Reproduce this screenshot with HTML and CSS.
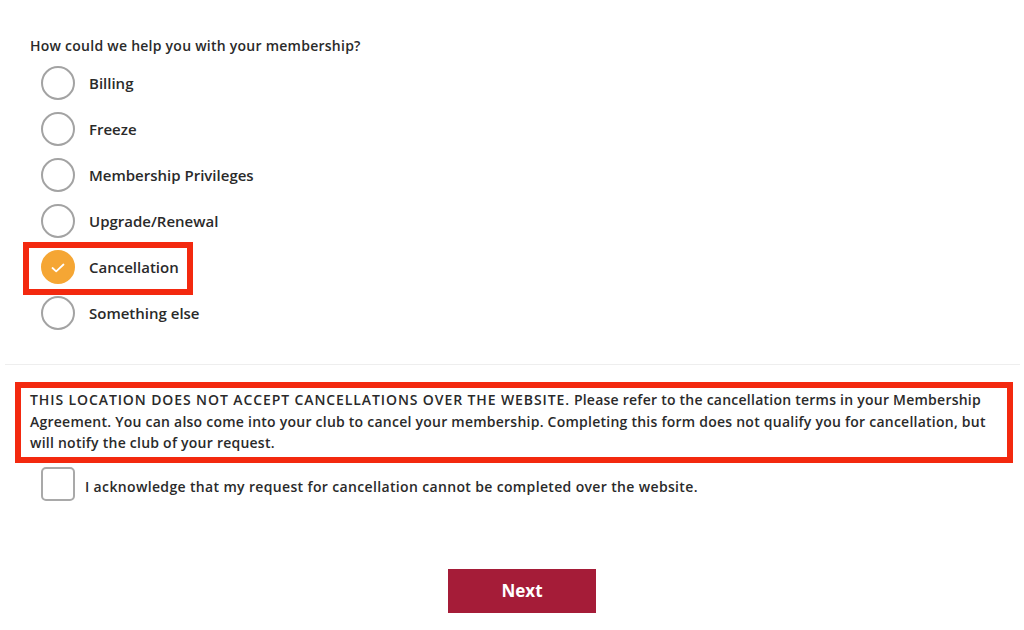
FILE: index.html
```html
<!DOCTYPE html>
<html lang="en">
<head>
    <meta charset="UTF-8">
    <meta name="viewport" content="width=device-width, initial-scale=1.0">
    <title>Membership Help</title>
    <link rel="stylesheet" href="styles.css">
</head>
<body>
    <div class="form">
        <p class="question">How could we help you with your membership?</p>
        <div class="options">
            <label class="option"><span class="radio"></span>Billing</label>
            <label class="option"><span class="radio"></span>Freeze</label>
            <label class="option"><span class="radio"></span>Membership Privileges</label>
            <label class="option"><span class="radio"></span>Upgrade/Renewal</label>
            <label class="option selected">
                <span class="radio checked">
                    <svg width="14" height="10" viewBox="0 0 14 10"><path d="M1.5 5 L5.2 8.3 L12.5 1.5" fill="none" stroke="#fff" stroke-width="1.8" stroke-linecap="round" stroke-linejoin="round"/></svg>
                </span>Cancellation
            </label>
            <label class="option"><span class="radio"></span>Something else</label>
        </div>
    </div>

    <hr class="divider">

    <div class="notice"><span class="caps">THIS LOCATION DOES NOT ACCEPT CANCELLATIONS OVER THE WEBSITE.</span> Please refer to the cancellation terms in your Membership Agreement. You can also come into your club to cancel your membership. Completing this form does not qualify you for cancellation, but will notify the club of your request.</div>

    <label class="ack"><span class="box"></span><span class="ack-text">I acknowledge that my request for cancellation cannot be completed over the website.</span></label>

    <div class="actions">
        <button class="next">Next</button>
    </div>
</body>
</html>
```

FILE: styles.css
```css
body { margin: 0; background: #fff; color: #2a2a2a; font-family: "Open Sans", Arial, sans-serif; }
.form { padding-left: 30px; }
.question { margin: 0; padding-top: 36px; font-size: 14px; line-height: 20px; font-weight: 600; letter-spacing: 0.25px; }
.options { margin-top: 5px; padding-left: 11px; }
.option { display: flex; align-items: center; gap: 14px; height: 46px; width: fit-content; font-size: 15px; font-weight: 600; position: relative; top: -1px; }
.radio { width: 30px; height: 30px; border: 2px solid #a3a3a3; border-radius: 50%; display: flex; align-items: center; justify-content: center; }
.radio.checked { background: #f5a634; border-color: #f5a634; }
.radio.checked svg { margin-top: 2px; }
.selected::after { content: ""; position: absolute; left: -18px; top: -2px; bottom: -5px; width: 158px; border: 6px solid #f3290f; }
.divider { margin: 27px 4px 0 5px; border: none; border-top: 1px solid #eeeeee; }
.notice { margin: 17px 11px 0 15px; border: 6px solid #f3290f; padding: 1px 9px 3px; font-size: 14px; line-height: 21.5px; font-weight: 600; letter-spacing: 0.24px; }
.caps { letter-spacing: 0.9px; }
.ack { display: flex; align-items: center; gap: 10px; margin: 4px 0 0 41px; font-size: 14px; font-weight: 600; letter-spacing: 0.35px; }
.ack-text { position: relative; top: 3px; }
.box { width: 30px; height: 30px; border: 2px solid #a9a9a9; border-radius: 5px; }
.actions { display: flex; justify-content: center; margin-top: 68px; padding-left: 20px; }
.next { width: 148px; height: 44px; background: #a51c38; color: #fff; border: none; font-family: "Open Sans", Arial, sans-serif; font-size: 17px; font-weight: 700; }
```
